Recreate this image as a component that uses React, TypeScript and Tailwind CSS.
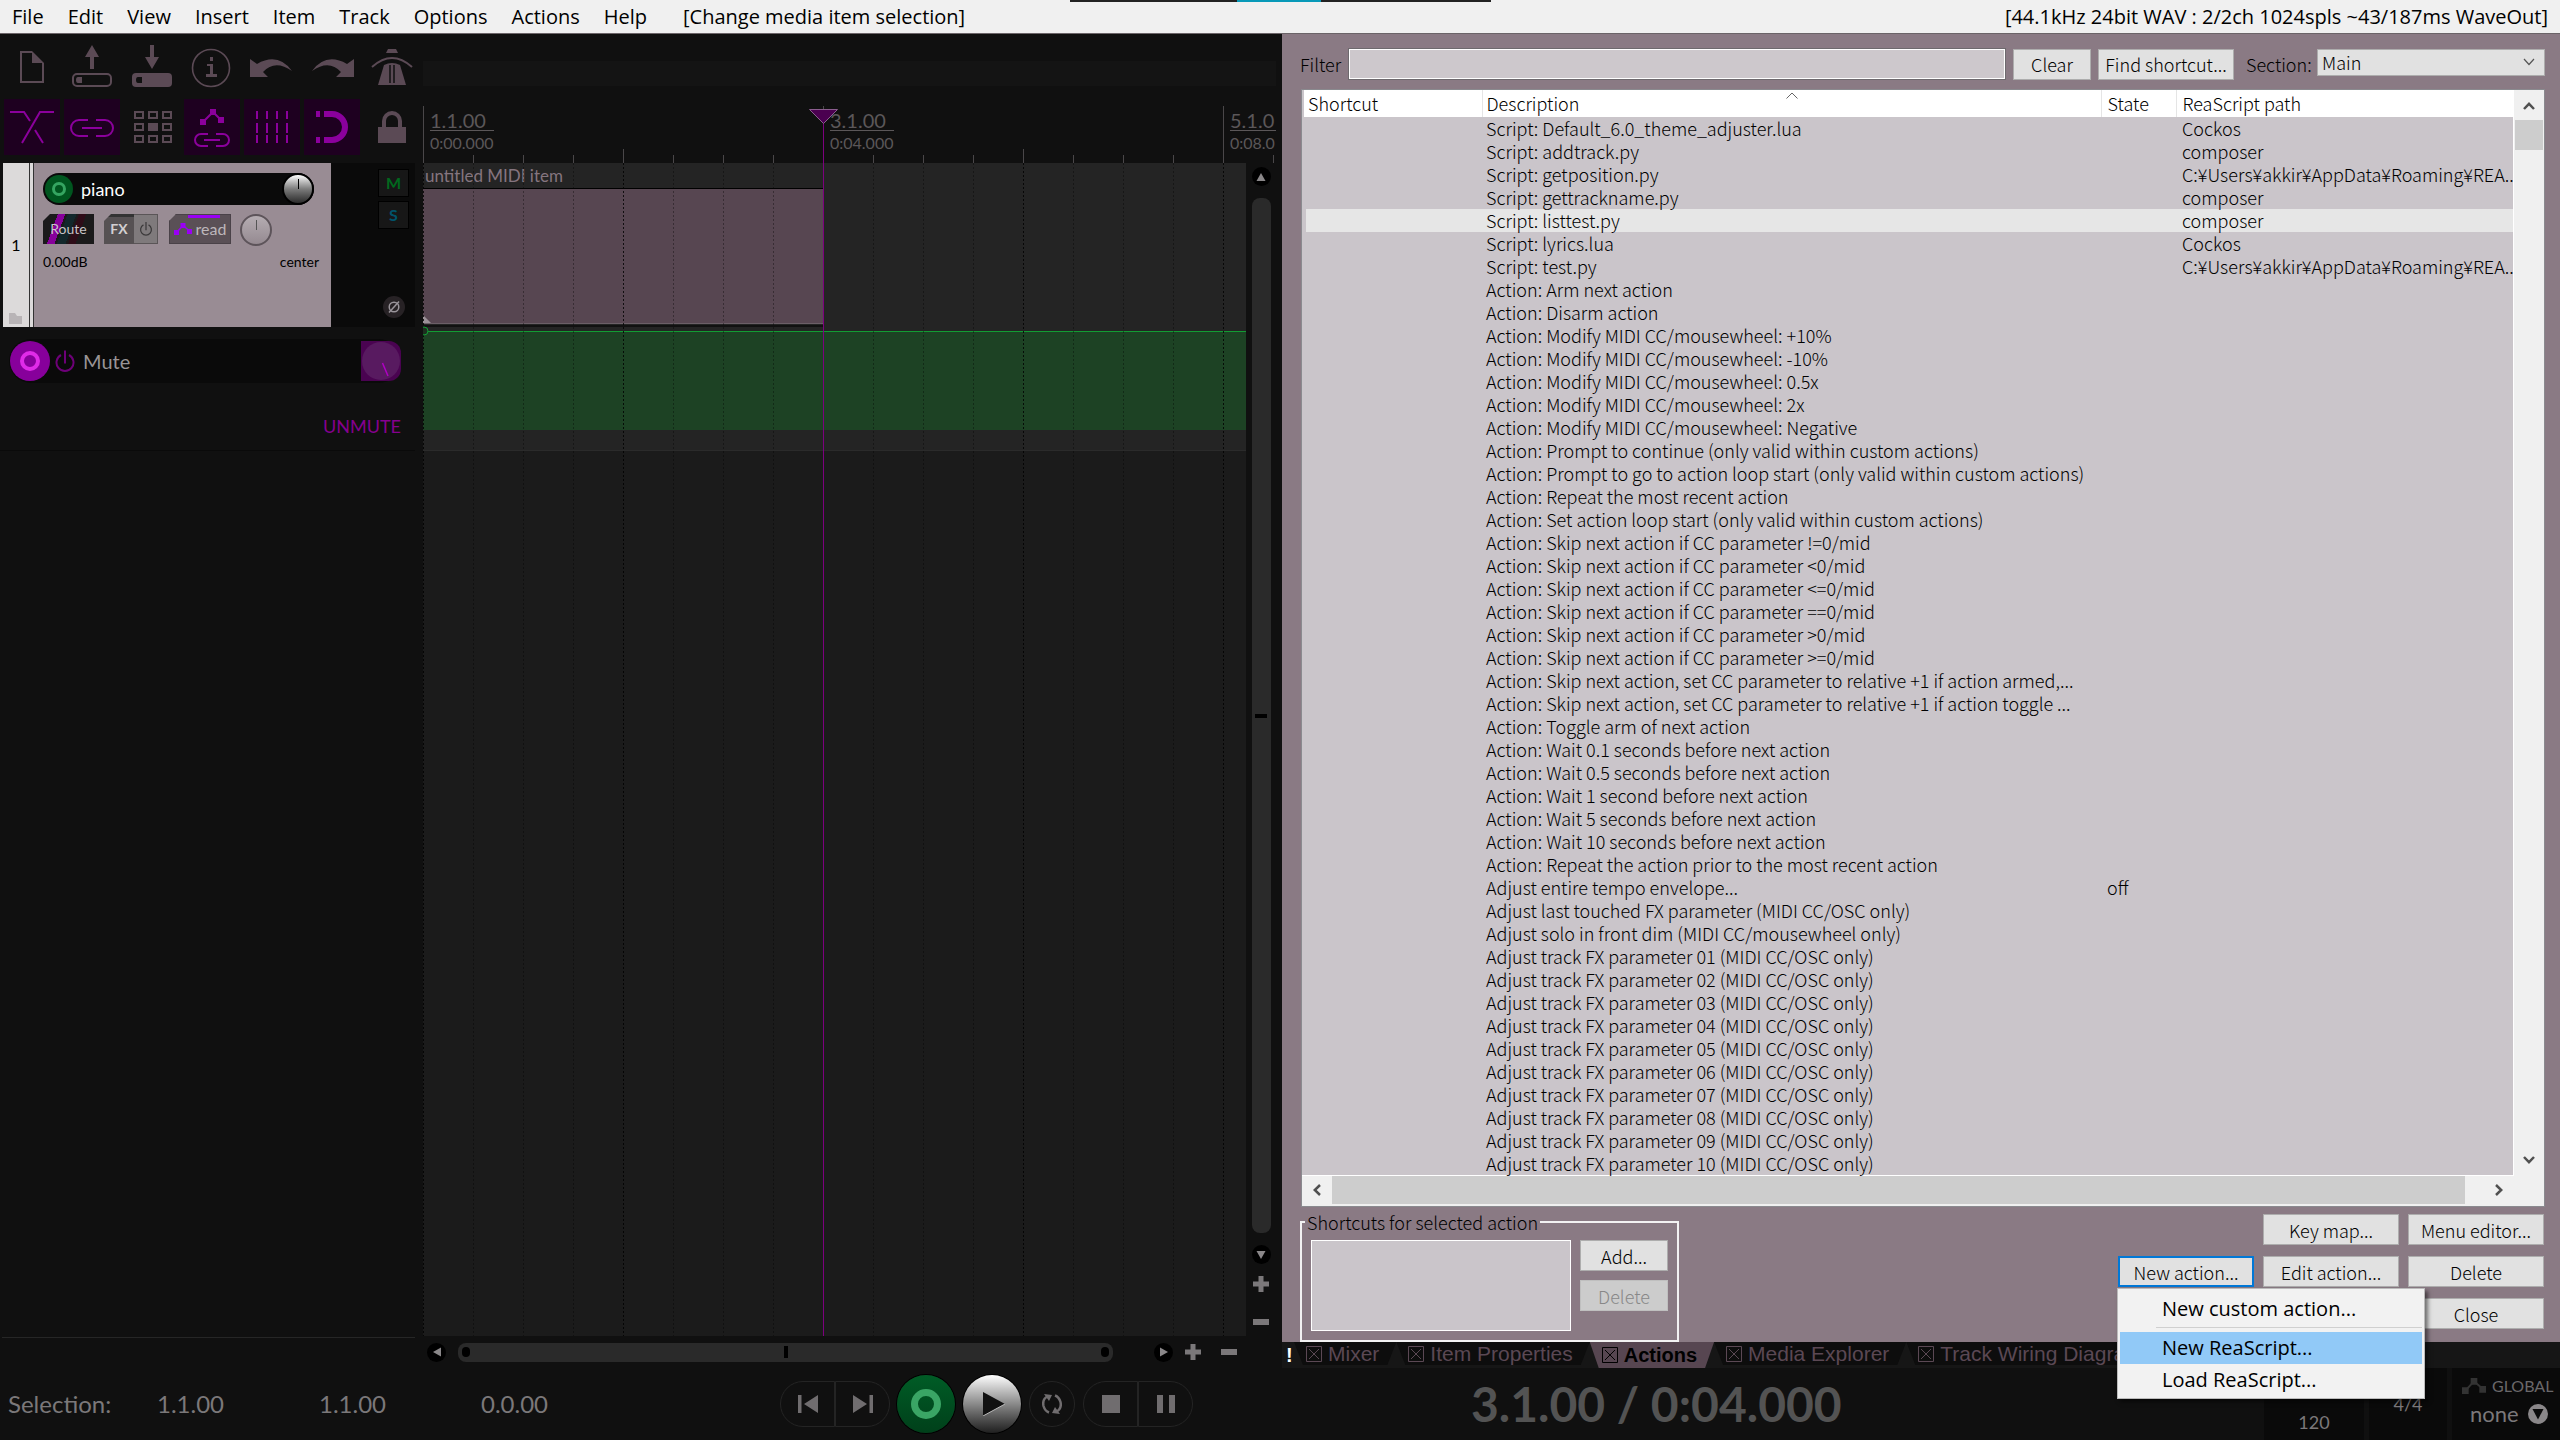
import type { ReactNode } from "react"
import { clsx } from "clsx"

type ActionRow = { name: string; state?: string; path?: string; selected?: boolean }

const USER_PATH = "C:¥Users¥akkir¥AppData¥Roaming¥REA.."

const ACTIONS: ActionRow[] = [
  { name: "Script: Default_6.0_theme_adjuster.lua", path: "Cockos" },
  { name: "Script: addtrack.py", path: "composer" },
  { name: "Script: getposition.py", path: USER_PATH },
  { name: "Script: gettrackname.py", path: "composer" },
  { name: "Script: listtest.py", path: "composer", selected: true },
  { name: "Script: lyrics.lua", path: "Cockos" },
  { name: "Script: test.py", path: USER_PATH },
  { name: "Action: Arm next action" },
  { name: "Action: Disarm action" },
  { name: "Action: Modify MIDI CC/mousewheel: +10%" },
  { name: "Action: Modify MIDI CC/mousewheel: -10%" },
  { name: "Action: Modify MIDI CC/mousewheel: 0.5x" },
  { name: "Action: Modify MIDI CC/mousewheel: 2x" },
  { name: "Action: Modify MIDI CC/mousewheel: Negative" },
  { name: "Action: Prompt to continue (only valid within custom actions)" },
  { name: "Action: Prompt to go to action loop start (only valid within custom actions)" },
  { name: "Action: Repeat the most recent action" },
  { name: "Action: Set action loop start (only valid within custom actions)" },
  { name: "Action: Skip next action if CC parameter !=0/mid" },
  { name: "Action: Skip next action if CC parameter <0/mid" },
  { name: "Action: Skip next action if CC parameter <=0/mid" },
  { name: "Action: Skip next action if CC parameter ==0/mid" },
  { name: "Action: Skip next action if CC parameter >0/mid" },
  { name: "Action: Skip next action if CC parameter >=0/mid" },
  { name: "Action: Skip next action, set CC parameter to relative +1 if action armed,..." },
  { name: "Action: Skip next action, set CC parameter to relative +1 if action toggle ..." },
  { name: "Action: Toggle arm of next action" },
  { name: "Action: Wait 0.1 seconds before next action" },
  { name: "Action: Wait 0.5 seconds before next action" },
  { name: "Action: Wait 1 second before next action" },
  { name: "Action: Wait 5 seconds before next action" },
  { name: "Action: Wait 10 seconds before next action" },
  { name: "Action: Repeat the action prior to the most recent action" },
  { name: "Adjust entire tempo envelope...", state: "off" },
  { name: "Adjust last touched FX parameter (MIDI CC/OSC only)" },
  { name: "Adjust solo in front dim (MIDI CC/mousewheel only)" },
  ...["01", "02", "03", "04", "05", "06", "07", "08", "09", "10"].map((n) => ({
    name: `Adjust track FX parameter ${n} (MIDI CC/OSC only)`,
  })),
]

const MENUS = ["File", "Edit", "View", "Insert", "Item", "Track", "Options", "Actions", "Help"]

function MenuBar() {
  return (
    <header className="relative flex h-[34px] shrink-0 items-center justify-between border-b border-[#6b6468] bg-[#f0f0f0] pr-3 font-['Open_Sans',sans-serif] text-xl text-black">
      <nav className="flex items-center">
        {MENUS.map((m) => (
          <button key={m} type="button" className="px-3">
            {m}
          </button>
        ))}
        <span className="pl-6">[Change media item selection]</span>
      </nav>
      <span>[44.1kHz 24bit WAV : 2/2ch 1024spls ~43/187ms WaveOut]</span>
      {/* capture overlay handle on the top edge */}
      <div className="absolute top-0 left-[1070px] flex h-0.5 w-[421px] bg-[#222]">
        <div className="ml-[167px] w-[84px] bg-[#0899b8]" />
      </div>
    </header>
  )
}

/* ---------- main toolbar ---------- */

function ToolButton({ label, active, children }: { label: string; active?: boolean; children: ReactNode }) {
  return (
    <button
      type="button"
      aria-label={label}
      className={clsx("size-14", active ? "bg-[#1e0020] text-[#8b009c]" : "text-[#5b4a55]")}
    >
      <svg viewBox="0 0 56 56" className="size-14" fill="none" stroke="currentColor" strokeWidth="2">
        {children}
      </svg>
    </button>
  )
}

function Toolbar() {
  return (
    <div className="grid h-[129px] shrink-0 grid-cols-[repeat(7,56px)] content-start gap-1 pt-[5px] pl-1">
      <ToolButton label="New project">
        <path d="M28 13H17V43H39V24" />
        <path d="M28 12L40 24H28Z" fill="currentColor" stroke="none" />
      </ToolButton>
      <ToolButton label="Open project">
        <path d="M28 6L35 18H30V30H26V18H21Z" fill="currentColor" stroke="none" />
        <rect x="9" y="35" width="38" height="12" rx="4" />
        <path d="M18 38V44H14Q12 44 12 41T14 38Z" fill="currentColor" stroke="none" />
      </ToolButton>
      <ToolButton label="Save project">
        <path d="M28 30L35 18H30V6H26V18H21Z" fill="currentColor" stroke="none" />
        <rect x="8" y="34" width="40" height="14" rx="4" fill="currentColor" stroke="none" />
        <path d="M18 38V44H14Q12 44 12 41T14 38Z" fill="#101010" stroke="none" />
      </ToolButton>
      <ToolButton label="Project settings">
        <circle cx="27" cy="29" r="18.5" strokeWidth="1.6" />
        <path d="M26 18h3v4h-3zM23 25h6v10h4v3H22v-3h4v-8h-3z" fill="currentColor" stroke="none" />
      </ToolButton>
      <ToolButton label="Undo">
        <path d="M6 20V38H24L19 33Q31 20 48 32Q34 13 13 25Z" fill="currentColor" stroke="none" />
      </ToolButton>
      <ToolButton label="Redo">
        <path d="M50 20V38H32L37 33Q25 20 8 32Q22 13 43 25Z" fill="currentColor" stroke="none" />
      </ToolButton>
      <ToolButton label="Metronome">
        <path d="M24 10H32L34 14H22Z" fill="currentColor" stroke="none" />
        <path d="M8 28Q28 10 48 28" />
        <path d="M20 26Q28 22 36 26L42 46H14Z" fill="currentColor" stroke="none" />
        <path d="M26 44V26M30 44V26" stroke="#101010" strokeWidth="1.5" />
      </ToolButton>
      <ToolButton label="Auto-crossfade" active>
        <path d="M6 13H20L26 22M50 13H36L18 44M31 31L39 44" />
      </ToolButton>
      <ToolButton label="Item grouping" active>
        <path d="M24 21H15a8 8 0 0 0 0 16H24M32 21H41a8 8 0 0 1 0 16H32M18 29H38" />
      </ToolButton>
      <ToolButton label="Ripple editing">
        {[11, 25, 39].map((x) =>
          [13, 25, 37].map((y) => (
            <rect key={`${x}-${y}`} x={x} y={y} width="8" height="6" fill={x === 25 && y === 25 ? "currentColor" : "none"} />
          )),
        )}
      </ToolButton>
      <ToolButton label="Move envelope points with items" active>
        <path d="M19 23L29 13L37 21" />
        <path d="M16 20h6v6h-6zM26 10h6v6h-6zM34 18h6v6h-6z" fill="currentColor" stroke="none" />
        <path d="M24 35H17a6 6 0 0 0 0 12H24M32 35H39a6 6 0 0 1 0 12H32M20 41H36" />
      </ToolButton>
      <ToolButton label="Grid lines" active>
        {[13, 23, 33, 43].map((x) => (
          <path key={x} d={`M${x} 12v8M${x} 24v10M${x} 36v8`} />
        ))}
      </ToolButton>
      <ToolButton label="Snap" active>
        <path d="M20 15H28a13 13 0 0 1 0 26H20" strokeWidth="6" />
        <path d="M12 12h4v6h-4zM12 38h4v6h-4z" fill="currentColor" stroke="none" />
      </ToolButton>
      <ToolButton label="Lock">
        <rect x="14" y="28" width="28" height="16" fill="currentColor" stroke="none" />
        <path d="M20 28V22a8 8 0 0 1 16 0V28" strokeWidth="4" />
      </ToolButton>
    </div>
  )
}

/* ---------- track control panel ---------- */

function Knob({ label, dim }: { label: string; dim?: boolean }) {
  return (
    <button
      type="button"
      aria-label={label}
      className={clsx(
        "flex size-8 justify-center rounded-full border-2 pt-1",
        dim ? "border-[#5d545a] bg-linear-to-b from-[#b5adb2] to-[#958a91]" : "border-black bg-linear-to-b from-white via-[#7c7c7c] to-[#2c2c2c]",
      )}
    >
      <span className={clsx("h-2.5 w-px", dim ? "bg-[#555]" : "bg-black")} />
    </button>
  )
}

function TrackPanel() {
  return (
    <section className="ml-[3px] flex h-[164px] w-[412px] shrink-0 bg-[#0a0a0a] font-['Lato',sans-serif]">
      <div className="relative flex w-[26px] items-center justify-center bg-[#dcdada] text-base text-black">
        1
        <svg viewBox="0 0 13 11" className="absolute bottom-[3px] left-1.5 h-[11px] w-[13px]" fill="#b8b4b6">
          <path d="M0 0H6L8 3H13V11H0Z" />
        </svg>
      </div>
      <div className="w-[5px] border-x border-[#333] bg-[#dcdada]" />
      <div className="flex w-[297px] flex-col bg-[#998c94] pt-2.5 pr-3 pl-[9px]">
        <div className="flex h-8 w-[271px] items-center rounded-l-full rounded-r-full bg-[#0a0a0a]">
          <button
            type="button"
            aria-label="Record arm"
            className="m-0.5 flex size-7 items-center justify-center rounded-full bg-[#00561f]"
          >
            <span className="size-[14px] rounded-full border-[3px] border-[#35a561]" />
          </button>
          <span className="ml-1.5 flex-1 text-lg text-white">piano</span>
          <Knob label="Volume" />
        </div>
        <div className="mt-[9px] flex h-8 items-start">
          <button
            type="button"
            className="h-[30px] w-[51px] bg-[#1b1a1b] bg-[linear-gradient(110deg,transparent_24%,#87009b_24%_36%,transparent_36%_40%,#13282c_40%_54%,transparent_54%_58%,#2e0c18_58%_70%,transparent_70%)] text-sm text-[#c9c4c7] [clip-path:polygon(7px_0,100%_0,100%_100%,0_100%,0_7px)]"
          >
            Route
          </button>
          <div className="ml-2.5 flex h-[30px] w-[54px] [clip-path:polygon(7px_0,100%_0,100%_100%,0_100%,0_7px)]">
            <button type="button" className="w-[30px] bg-[linear-gradient(#333_0_3px,#565153_3px)] text-sm font-bold text-[#d2cfd1]">
              FX
            </button>
            <button type="button" aria-label="Bypass FX" className="flex flex-1 items-center justify-center border border-l-0 border-[#5a5557] bg-[#7f7a7c]">
              <PowerIcon className="size-3.5 text-[#3c3a3b]" />
            </button>
          </div>
          <button
            type="button"
            className="relative ml-[11px] flex h-[30px] w-[62px] items-center justify-center gap-1 border border-[#4a4248] bg-[#5a5056] text-base text-[#bdb7bb] [clip-path:polygon(7px_0,100%_0,100%_100%,0_100%,0_7px)]"
          >
            <span className="absolute top-0 left-[18px] h-[3px] w-8 bg-[#9a00f5]" />
            <EnvelopeIcon className="h-3 w-[18px] text-[#9a00f5]" />
            read
          </button>
          <div className="ml-[9px]">
            <Knob label="Pan" dim />
          </div>
        </div>
        <div className="mt-1.5 flex justify-between text-sm text-black">
          <span>0.00dB</span>
          <span>center</span>
        </div>
      </div>
      <div className="flex flex-1 flex-col items-end pt-1.5 pr-1.5">
        <button type="button" className="h-7 w-[31px] border border-black bg-[#171717] font-bold text-[#00691e]">
          M
        </button>
        <button type="button" className="mt-1 h-7 w-[31px] border border-black bg-[#171717] font-bold text-[#00546b]">
          S
        </button>
        <button type="button" aria-label="Phase" className="mt-auto mr-1 mb-[9px] flex size-[22px] items-center justify-center rounded-full bg-[#272225]">
          <svg viewBox="0 0 14 14" className="size-3.5" fill="none" stroke="#99949a" strokeWidth="1.5">
            <circle cx="7" cy="7" r="4.8" />
            <path d="M2 12.5L12 1.5" />
          </svg>
        </button>
      </div>
    </section>
  )
}

function PowerIcon({ className }: { className?: string }) {
  return (
    <svg viewBox="0 0 20 22" className={className} fill="none" stroke="currentColor" strokeWidth="2">
      <path d="M10 0V13M6 4.5A8.5 8.5 0 1 0 14 4.5" />
    </svg>
  )
}

function EnvelopeIcon({ className }: { className?: string }) {
  return (
    <svg viewBox="0 0 18 12" className={className} fill="currentColor" stroke="currentColor">
      <path d="M2.500 9.500L9 2.500L15.500 8" fill="none" strokeWidth="1.500" />
      <path d="M0 7h5v5H0zM6.500 0h5v5h-5zM13 6h5v5h-5z" stroke="none" />
    </svg>
  )
}

function EnvelopePanel() {
  return (
    <section className="h-[124px] w-[415px] shrink-0 border-b border-[#0a0a0a] pt-3 font-['Lato',sans-serif]">
      <div className="ml-[9px] flex h-11 w-[392px] items-center rounded-full bg-[#0a0a0a]">
        <button type="button" aria-label="Arm envelope" className="ml-px flex size-10 items-center justify-center rounded-full bg-[#87009b]">
          <span className="size-5 rounded-full border-4 border-[#e02be8]" />
        </button>
        <button type="button" aria-label="Bypass envelope" className="ml-[5px]">
          <PowerIcon className="h-[23px] w-5 text-[#6d0078]" />
        </button>
        <span className="ml-2 flex-1 text-xl text-[#999496]">Mute</span>
        <button type="button" aria-label="Mute value" className="size-10 rounded-r-xl bg-[#4a0351]">
          <svg viewBox="0 0 40 40" className="size-10">
            <circle cx="20" cy="20" r="19" fill="#581a60" />
            <path d="M21.500 22L27 35" stroke="#b100c4" strokeWidth="1.500" />
          </svg>
        </button>
      </div>
      <p className="mt-[31px] pr-3.5 text-right text-lg leading-6 text-[#86008f]">UNMUTE</p>
    </section>
  )
}

/* ---------- timeline ---------- */

const BEAT = 50

function Ruler() {
  // the last label has no room for its full value
  const marks = [
    { bar: "1.1.00", time: "0:00.000" },
    { bar: "3.1.00", time: "0:04.000" },
    { bar: "5.1.0", time: "0:08.0" },
  ]
  return (
    <div className="relative mr-1 h-[57px] shrink-0 overflow-hidden font-['Lato',sans-serif] text-[#5b5759]">
      <svg className="absolute inset-0 size-full" stroke="#4a4749">
        {Array.from({ length: 18 }, (_, i) => (
          <line key={i} x1={i * BEAT + 0.5} x2={i * BEAT + 0.5} y1={i % 8 === 0 ? 0 : i % 4 === 0 ? 43 : 49} y2="57" />
        ))}
      </svg>
      {marks.map((m, i) => (
        <div
          key={m.bar}
          className={clsx("absolute top-1", i === 2 ? "w-[46px]" : "w-16")}
          style={{ left: i * 8 * BEAT + 7 }}
        >
          <div className="border-b border-[#5b5759] text-xl leading-5">{m.bar}</div>
          <div className="text-base leading-6">{m.time}</div>
        </div>
      ))}
    </div>
  )
}

function Arrange() {
  return (
    <div className="relative min-w-0 flex-1 overflow-hidden bg-[#1b1b1b]">
      {/* track lane */}
      <div className="h-[164px] bg-[#242424] font-['Lato',sans-serif]">
        <div className="h-[164px] w-[400px] border-b-2 border-[#111]">
          <div className="h-[26px] border-b border-black pl-0.5 text-[17px] leading-[26px] text-[#85757f]">untitled MIDI item</div>
          <div className="relative h-[135px] border-b border-[#6b5f67] bg-[#574651]">
            <div className="absolute bottom-0 left-0 size-2 bg-[#9b9198] [clip-path:polygon(0_0,100%_100%,0_100%)]" />
          </div>
        </div>
      </div>
      {/* mute envelope lane */}
      <div className="h-[124px] border-b border-[#2b2b2b] bg-[#242424] pt-1">
        <div className="h-[99px] border-t border-[#129c33] bg-[#1d4224]" />
      </div>
      <svg className="absolute inset-0 size-full" strokeDasharray="2 2">
        {Array.from({ length: 17 }, (_, i) => (
          <line key={i} x1={i * BEAT + 0.5} x2={i * BEAT + 0.5} y1="0" y2="100%" stroke="#000" strokeOpacity={i % 4 === 0 ? 0.8 : 0.35} />
        ))}
        <circle cx="1" cy="168" r="4" fill="#1d2f20" stroke="#129c33" strokeDasharray="none" />
      </svg>
    </div>
  )
}

function RoundArrow({ label, rotate }: { label: string; rotate: string }) {
  return (
    <button type="button" aria-label={label} className="flex size-[19px] shrink-0 items-center justify-center rounded-full bg-black">
      <svg viewBox="0 0 10 8" className={clsx("h-2 w-2.5", rotate)} fill="#8a8789">
        <path d="M5 0L9.500 8H0.500Z" />
      </svg>
    </button>
  )
}

function ZoomGlyph({ label, plus }: { label: string; plus?: boolean }) {
  return (
    <button type="button" aria-label={label} className="size-4 shrink-0">
      <svg viewBox="0 0 16 16" className="size-4" fill="#7b787a">
        <path d={plus ? "M5.500 0H10.500V5.500H16V10.500H10.500V16H5.500V10.500H0V5.500H5.500Z" : "M0 5H16V11H0Z"} />
      </svg>
    </button>
  )
}

function Timeline() {
  return (
    <section className="flex min-w-0 flex-1 flex-col">
      <div className="mt-[27px] mr-1 h-[25px] shrink-0 bg-[#141414]" />
      <div className="relative mt-5 flex flex-1 flex-col">
        <Ruler />
        <div className="flex flex-1">
          <Arrange />
          <div className="flex w-[34px] flex-col items-center pr-1">
            <div className="mt-1">
              <RoundArrow label="Scroll up" rotate="rotate-0" />
            </div>
            <div className="mt-3 flex w-[19px] flex-1 flex-col items-center justify-center rounded-lg bg-[#2a2a2a]">
              <span className="h-1 w-3 bg-black" />
            </div>
            <div className="mt-3 mb-3">
              <RoundArrow label="Scroll down" rotate="rotate-180" />
            </div>
            <ZoomGlyph label="Zoom in vertically" plus />
            <div className="mt-5">
              <ZoomGlyph label="Zoom out vertically" />
            </div>
          </div>
        </div>
        {/* edit cursor */}
        <div className="absolute top-[3px] bottom-0 left-[400px] w-px bg-[#7d007f]" />
        <svg viewBox="0 0 29 15" className="absolute top-[3px] left-[386px] h-[15px] w-[29px]">
          <path d="M0.500 0.500H28.500L14.500 14.500Z" fill="#4b0050" stroke="#8b5d8e" />
        </svg>
      </div>
      <div className="flex h-8 shrink-0 items-center pr-[43px] pl-1">
        <RoundArrow label="Scroll left" rotate="-rotate-90" />
        <div className="mr-[41px] ml-3 flex h-[19px] flex-1 items-center justify-between rounded-lg bg-[#2a2a2a] px-1">
          <span className="h-2.5 w-2 rounded-full bg-black" />
          <span className="h-3 w-1 bg-black" />
          <span className="h-2.5 w-2 rounded-full bg-black" />
        </div>
        <RoundArrow label="Scroll right" rotate="rotate-90" />
        <div className="mr-5 ml-3 flex">
          <ZoomGlyph label="Zoom in" plus />
        </div>
        <ZoomGlyph label="Zoom out" />
      </div>
    </section>
  )
}

/* ---------- actions window ---------- */

function DialogButton({ children, className, disabled }: { children: ReactNode; className?: string; disabled?: boolean }) {
  return (
    <button
      type="button"
      disabled={disabled}
      className={clsx(
        "h-[31px] shrink-0 border whitespace-nowrap",
        disabled ? "border-[#bfbfbf] bg-[#cccccc] text-[#888]" : "bg-[#e1e1e1] text-black",
        className,
      )}
    >
      {children}
    </button>
  )
}

function Chevron({ className }: { className?: string }) {
  return (
    <svg viewBox="0 0 12 8" className={clsx("h-2 w-3", className)} fill="none" stroke="#505050" strokeWidth="2.500">
      <path d="M1 7L6 1.800L11 7" />
    </svg>
  )
}

function ActionTable() {
  return (
    <div className="mt-[9px] ml-[3px] flex flex-1 flex-col border border-[#8a8a8f] bg-[#f0f0f0]">
      <div className="flex">
        <div className="min-w-0 flex-1 border-r border-b border-white bg-[#cac5ca]">
          <table className="w-full table-fixed border-collapse text-left">
            <colgroup>
              <col className="w-[178px]" />
              <col />
              <col className="w-[75px]" />
              <col className="w-[337px]" />
            </colgroup>
            <thead>
              <tr className="h-[27px] bg-white leading-[27px]">
                <th className="border-r border-[#e5e5e5] p-0 pl-1 font-light">Shortcut</th>
                <th className="relative border-r border-[#e5e5e5] p-0 pl-1 font-light">
                  Description
                  <svg viewBox="0 0 12 7" className="absolute top-0.5 left-1/2 -ml-1.5 h-[7px] w-3" fill="none" stroke="#666">
                    <path d="M0.500 6.500L6 1L11.500 6.500" />
                  </svg>
                </th>
                <th className="border-r border-[#e5e5e5] p-0 pl-1.5 font-light">State</th>
                <th className="p-0 pl-1.5 font-light">ReaScript path</th>
              </tr>
            </thead>
            <tbody>
              {ACTIONS.map((a) => (
                <tr key={a.name} className={clsx("h-[23px] leading-[23px] whitespace-nowrap", a.selected && "bg-[#e6e6e6]")}>
                  <td className="border-l-4 border-[#cac5ca] p-0" />
                  <td className="p-0 pl-1">{a.name}</td>
                  <td className="p-0 pl-1.5">{a.state}</td>
                  <td className="p-0 pl-1.5">{a.path}</td>
                </tr>
              ))}
            </tbody>
          </table>
        </div>
        <div className="flex w-[30px] flex-col items-center justify-between py-3">
          <div className="flex w-full flex-col items-center">
            <Chevron />
            <div className="mt-2.5 h-[30px] w-7 bg-[#cdcdcd]" />
          </div>
          <Chevron className="rotate-180" />
        </div>
      </div>
      <div className="flex h-7 items-center">
        <span className="flex w-[30px] justify-center">
          <Chevron className="-rotate-90" />
        </span>
        <span className="h-full flex-1 bg-[#cdcdcd]" />
        <span className="flex w-[79px] pl-7">
          <Chevron className="rotate-90" />
        </span>
      </div>
    </div>
  )
}

function ActionsWindow() {
  return (
    <div className="flex flex-1 flex-col bg-[#8a7a84] pt-3.5 pr-[15px] pl-4 font-['Noto_Sans_CJK_JP',sans-serif] text-lg font-light text-black">
      <div className="flex h-8 items-center">
        <label htmlFor="filter" className="w-[50px] pl-0.5">
          Filter
        </label>
        <input id="filter" className="h-8 min-w-0 flex-1 border border-[#6e6a6e] bg-[#cdc8cc] outline-1 -outline-offset-2 outline-white" />
        <DialogButton className="ml-[7px] w-[78px] border-[#adadad]">Clear</DialogButton>
        <DialogButton className="ml-[7px] w-[136px] border-[#adadad]">Find shortcut...</DialogButton>
        <label htmlFor="section" className="ml-3 w-[71px]">
          Section:
        </label>
        <div className="relative mb-1">
          <select id="section" className="h-[27px] w-[228px] appearance-none border border-[#adadad] bg-[#e1e1e1] pl-1 leading-6">
            <option>Main</option>
          </select>
          <svg viewBox="0 0 12 8" className="absolute top-2.5 right-2.5 h-2 w-3" fill="none" stroke="#555" strokeWidth="1.200">
            <path d="M1 1L6 6.500L11 1" />
          </svg>
        </div>
      </div>
      <ActionTable />
      <div className="flex h-[135px] justify-between pt-[7px] pr-px pl-0.5">
        <fieldset className="flex h-[128px] w-[375px] border-2 border-white/90 px-[9px] pt-2.5">
          <legend className="-ml-1.5 px-0.5 leading-4">Shortcuts for selected action</legend>
          <textarea aria-label="Shortcuts" className="h-[91px] w-[260px] shrink-0 resize-none border border-white bg-[#cac5ca]" />
          <div className="ml-[9px] flex flex-col gap-[9px]">
            <DialogButton className="w-[88px] border-[#adadad]">Add...</DialogButton>
            <DialogButton className="w-[88px]" disabled>
              Delete
            </DialogButton>
          </div>
        </fieldset>
        <div className="relative grid auto-rows-[31px] grid-cols-[136px_136px_136px] content-start gap-x-[9px] gap-y-[11px]">
          <DialogButton className="col-start-2 border-[#adadad]">Key map...</DialogButton>
          <DialogButton className="border-[#adadad]">Menu editor...</DialogButton>
          <DialogButton className="border-[#0078d7] outline-1 -outline-offset-2 outline-[#0078d7]">New action...</DialogButton>
          <DialogButton className="border-[#adadad]">Edit action...</DialogButton>
          <DialogButton className="border-[#adadad]">Delete</DialogButton>
          <DialogButton className="col-start-3 border-[#adadad]">Close</DialogButton>
          <ContextMenu />
        </div>
      </div>
    </div>
  )
}

function ContextMenu() {
  return (
    <div
      role="menu"
      className="absolute top-[74px] -left-px z-10 flex w-[308px] flex-col border border-[#bbb] bg-[#f2f2f2] p-0.5 font-['Open_Sans',sans-serif] text-xl font-normal text-black shadow-[3px_3px_4px_rgba(0,0,0,0.5)]"
    >
      <button type="button" role="menuitem" className="h-9 pl-[42px] text-left">
        New custom action...
      </button>
      <div className="mb-1 ml-9 h-px bg-[#d0d0d0]" />
      <button type="button" role="menuitem" className="h-8 bg-[#91c9f7] pl-[42px] text-left">
        New ReaScript...
      </button>
      <button type="button" role="menuitem" className="h-8 pl-[42px] text-left">
        Load ReaScript...
      </button>
    </div>
  )
}

const TABS = ["Mixer", "Item Properties", "Actions", "Media Explorer", "Track Wiring Diagram"]

function DockTabs() {
  return (
    <div className="flex h-[26px] shrink-0 items-start bg-[#161616] pl-1 font-['Liberation_Sans',sans-serif] leading-[26px]">
      <span className="w-2 text-xl leading-[26px] font-bold text-white">!</span>
      {TABS.map((t) => {
        const active = t === "Actions"
        return (
          <button
            key={t}
            type="button"
            className={clsx(
              "flex items-center gap-1.5 pr-[17px] pl-3 whitespace-nowrap [clip-path:polygon(0_0,100%_0,calc(100%-9px)_100%,9px_100%)]",
              active ? "h-[26px] bg-[#574651] text-xl font-bold text-black" : "h-[23px] bg-[#0d0d0d] text-[21px] text-[#5b4854]",
            )}
          >
            <svg viewBox="0 0 16 16" className="size-4" fill="none" stroke="currentColor">
              <path d="M0.500 0.500H15.500V15.500H0.500ZM3 3L13 13M13 3L3 13" />
            </svg>
            {t}
          </button>
        )
      })}
    </div>
  )
}

/* ---------- transport ---------- */

function TransportButton({ label, className, children }: { label: string; className?: string; children: ReactNode }) {
  return (
    <button type="button" aria-label={label} className={clsx("flex h-[46px] items-center justify-center border border-[#242424] bg-[#101010]", className)}>
      <svg viewBox="0 0 20 20" className="size-5" fill="#706d6f">
        {children}
      </svg>
    </button>
  )
}

function Transport() {
  return (
    <footer className="flex h-[72px] shrink-0 items-center bg-[#101010] font-['Lato',sans-serif] text-[#7b787a]">
      <div className="grid w-[780px] shrink-0 grid-cols-[149px_162px_162px_auto] pl-2 text-2xl">
        <span>Selection:</span>
        <span>1.1.00</span>
        <span>1.1.00</span>
        <span>0.0.00</span>
      </div>
      <div className="flex w-[414px] shrink-0 items-center">
        <TransportButton label="Go to start" className="w-[55px] rounded-l-full">
          <path d="M0 1H3.500V19H0ZM20 1V19L6 10Z" />
        </TransportButton>
        <TransportButton label="Go to end" className="w-[55px] rounded-r-full">
          <path d="M20 1H16.500V19H20ZM0 1V19L14 10Z" />
        </TransportButton>
        <button type="button" aria-label="Record" className="ml-[7px] flex size-[58px] items-center justify-center rounded-full bg-linear-to-b from-[#005c26] to-[#00401a] ring-1 ring-black">
          <span className="size-[30px] rounded-full border-[7px] border-[#3aa565]" />
        </button>
        <button type="button" aria-label="Play" className="ml-2 flex size-[58px] items-center justify-center rounded-full bg-linear-to-b from-white via-[#8a8a8a] to-[#202020] ring-1 ring-black">
          <svg viewBox="0 0 24 24" className="ml-1 size-6" fill="#111" stroke="#bbb">
            <path d="M1 0V24L23 12Z" stroke="none" />
            <path d="M1 24L23 12" />
          </svg>
        </button>
        <TransportButton label="Repeat" className="ml-2 w-[46px] rounded-full">
          <path d="M6 2Q0 5 1.500 12Q3 17 7 18.500M14 18Q20 15 18.500 8Q17 3 13 1.500" fill="none" stroke="#706d6f" strokeWidth="2.500" />
          <path d="M2 0L10 1L7 7ZM18 20L10 19L13 13Z" />
        </TransportButton>
        <TransportButton label="Stop" className="ml-2 w-[55px] rounded-l-full">
          <path d="M1 1H19V19H1Z" />
        </TransportButton>
        <TransportButton label="Pause" className="w-[55px] rounded-r-full">
          <path d="M1 1H7V19H1ZM13 1H19V19H13Z" />
        </TransportButton>
      </div>
      <div className="flex-1 pl-[277px] text-5xl leading-none font-bold whitespace-nowrap text-[#535353]">3.1.00 / 0:04.000</div>
      <div className="flex h-full w-[100px] items-end justify-center bg-[#0a0a0a] pb-1 text-lg">120</div>
      <div className="ml-[5px] flex h-full w-[78px] items-center justify-center bg-[#0a0a0a] text-lg">4/4</div>
      <div className="ml-[5px] flex h-full w-[108px] flex-col gap-1 bg-[#0a0a0a] pt-2 pl-2.5">
        <div className="flex items-center gap-1.5 text-base leading-5 text-[#6a686a]">
          <EnvelopeIcon className="h-4 w-6 text-[#333]" />
          GLOBAL
        </div>
        <button type="button" className="flex items-center justify-between pr-3 pl-2 text-[22px] leading-7">
          none
          <svg viewBox="0 0 20 20" className="size-5">
            <circle cx="10" cy="10" r="10" fill="#8a8789" />
            <path d="M4.500 5H15.500L10 15.500Z" fill="#0a0a0a" />
          </svg>
        </button>
      </div>
    </footer>
  )
}

export default function App() {
  return (
    <div className="flex min-h-screen flex-col bg-[#101010]">
      <MenuBar />
      <main className="flex flex-1">
        <div className="flex w-1/2">
          <div className="flex w-[423px] shrink-0 flex-col">
            <Toolbar />
            <TrackPanel />
            <EnvelopePanel />
            <div className="mr-2 mb-[30px] ml-0.5 flex-1 border-b border-[#262626]" />
          </div>
          <Timeline />
        </div>
        <div className="flex w-1/2 flex-col border-l-2 border-[#101010]">
          <ActionsWindow />
          <DockTabs />
        </div>
      </main>
      <Transport />
    </div>
  )
}
